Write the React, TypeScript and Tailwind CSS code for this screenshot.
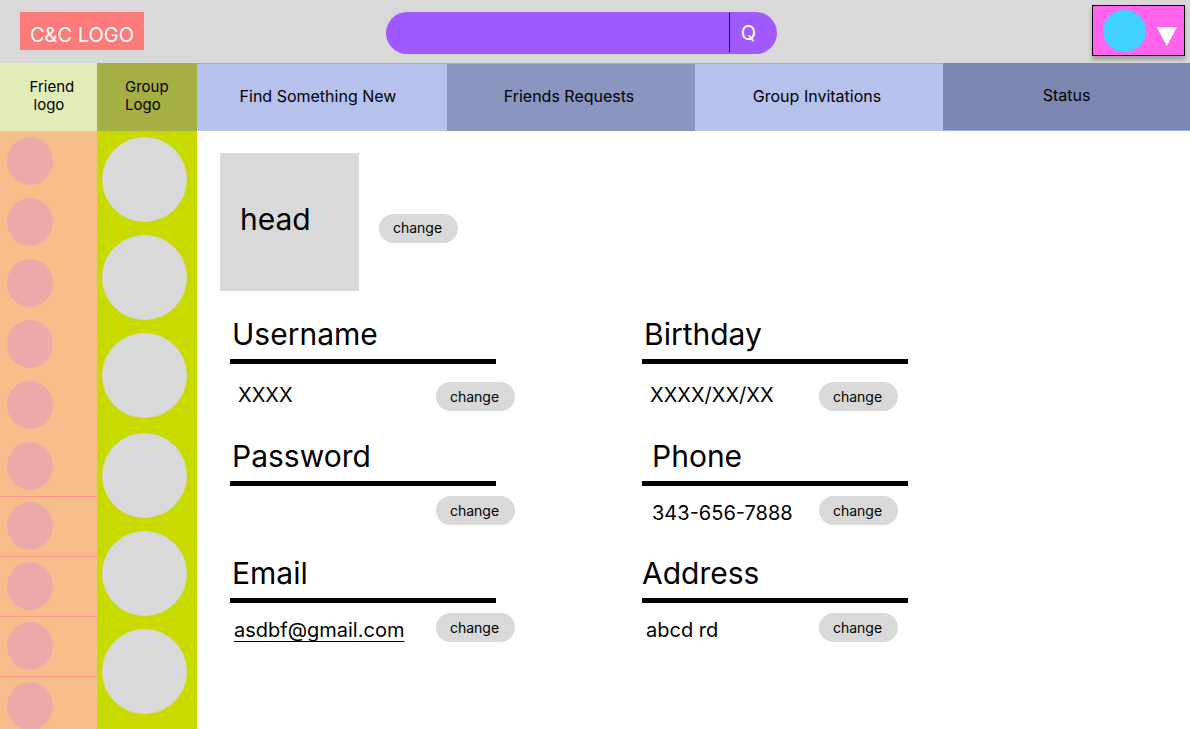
const friendRows = [
  { id: 1, divided: false, compact: false },
  { id: 2, divided: false, compact: false },
  { id: 3, divided: false, compact: false },
  { id: 4, divided: false, compact: false },
  { id: 5, divided: false, compact: false },
  { id: 6, divided: true, compact: false },
  { id: 7, divided: true, compact: true },
  { id: 8, divided: true, compact: true },
  { id: 9, divided: true, compact: true },
  { id: 10, divided: false, compact: true },
];

const groupSets = [
  [1, 2, 3],
  [4, 5, 6],
];

const tabs = [
  { label: "Find Something New", look: "border-t border-[#93a8ee] bg-[#b6c1ec] pr-2" },
  { label: "Friends Requests", look: "border-t border-[#93a8ee] bg-[#8a95c0] pr-1" },
  { label: "Group Invitations", look: "border-t border-[#93a8ee] bg-[#b6c1ec] pr-1" },
  { label: "Status", look: "border-b border-[#93a8ee] bg-[#7d88b2]" },
];

type FieldProps = {
  title: string;
  titleInset?: string;
  valueInset?: string;
  rowGap?: string;
  width: string;
  children?: React.ReactNode;
};

function ChangeButton({ label }: { label: string }) {
  return (
    <button
      type="button"
      aria-label={`change ${label}`}
      className="h-[29px] w-[79px] shrink-0 rounded-full bg-[#d9d9d9] pr-0.5 text-sm"
    >
      change
    </button>
  );
}

function Field({
  title,
  titleInset = "pl-0.5",
  valueInset = "",
  rowGap = "mt-2.5 mb-[3px]",
  width,
  children,
}: FieldProps) {
  return (
    <section>
      <h2 className={`w-[266px] border-b-[5px] border-black pb-[7px] text-[30px] leading-[35px] ${titleInset}`}>
        {title}
      </h2>
      <div className={`flex items-center justify-between ${rowGap} ${width}`}>
        <div className={`text-xl leading-6 ${valueInset}`}>{children}</div>
        <ChangeButton label={title} />
      </div>
    </section>
  );
}

export default function App() {
  return (
    <div className="flex h-screen flex-col overflow-hidden bg-white font-['Inter',sans-serif] text-black">
      <header className="flex h-[63px] shrink-0 items-start bg-[#d9d9d9] pr-[5px] pl-5">
        <a
          href="#home"
          className="mt-3 flex h-[38px] w-[124px] shrink-0 items-end bg-[#fc7a79] pb-0.5 pl-2.5 text-xl leading-[26px] whitespace-nowrap text-white"
        >
          C&amp;C LOGO
        </a>
        <form role="search" className="mt-3 ml-[242px] flex h-[42px] w-[391px] overflow-hidden rounded-full bg-[#9f59fd]">
          <input
            type="search"
            aria-label="Search"
            className="min-w-0 flex-1 bg-transparent px-5 text-xl text-white outline-none"
          />
          <button
            type="submit"
            aria-label="Q, search"
            className="mt-px mb-0.5 w-12 border-l border-black pr-2.5 text-xl text-white"
          >
            Q
          </button>
        </form>
        <button
          type="button"
          aria-label="Account menu"
          className="mt-[5px] ml-auto flex h-[51px] w-[93px] shrink-0 items-start border border-black bg-[#ff64eb] pt-1 pl-2.5 shadow-[0_4px_4px_rgba(0,0,0,0.25)]"
        >
          <span className="h-[42px] w-[43px] rounded-full bg-[#41d1ff]" />
          <svg viewBox="0 0 21 19" className="mt-[17px] ml-2.5 h-[19px] w-[21px]" aria-hidden="true">
            <path d="M0.6 0H21L10.8 19Z" fill="white" />
          </svg>
        </button>
      </header>

      <nav className="flex h-[68px] shrink-0">
        <a
          href="#friends"
          className="flex w-[97px] shrink-0 items-center justify-center bg-[#e2ecb9] pb-0.5 pl-2 text-[15px] leading-[18px]"
        >
          <span className="w-[46px]">
            Friend
            <br />
            <span className="pl-1">logo</span>
          </span>
        </a>
        <a
          href="#groups"
          className="flex w-[100px] shrink-0 items-center bg-[#a6af43] pb-0.5 pl-7 text-[15px] leading-[18px]"
        >
          <span>
            Group
            <br />
            Logo
          </span>
        </a>
        <div className="grid flex-1 grid-cols-[250fr_248fr_248fr_247fr]">
          {tabs.map((tab) => (
            <a
              key={tab.label}
              href="#tab"
              className={`flex items-center justify-center pb-[3px] text-base whitespace-nowrap ${tab.look}`}
            >
              {tab.label}
            </a>
          ))}
        </div>
      </nav>

      <div className="flex min-h-0 flex-1">
        <ul aria-label="Friends" className="w-[97px] shrink-0 overflow-hidden bg-[#f6be8b]">
          {friendRows.map((row) => (
            <li
              key={row.id}
              className={`pl-[7px] ${row.compact ? "h-[60px] pt-[5px]" : "h-[61px] pt-1.5"} ${
                row.divided ? "border-b border-[#ff9488]" : ""
              }`}
            >
              <div className="h-12 w-[46px] rounded-[50%] bg-[#ebaaaa]" />
            </li>
          ))}
        </ul>

        <div className="flex w-[100px] shrink-0 flex-col gap-[15px] overflow-hidden bg-[#c8da00] pt-1.5 pl-[5px]">
          {groupSets.map((set) => (
            <ul key={set[0]} aria-label="Groups" className="flex flex-col gap-[13px]">
              {set.map((id) => (
                <li key={id} className="size-[85px] rounded-full bg-[#d9d9d9]" />
              ))}
            </ul>
          ))}
        </div>

        <main className="min-w-0 flex-1 overflow-auto pt-[22px] pl-[23px]">
          <div className="flex items-center gap-5">
            <div className="flex h-[138px] w-[139px] items-center bg-[#d9d9d9] pb-1.5 pl-5 text-[30px] leading-9">
              head
            </div>
            <div className="pt-3">
              <ChangeButton label="head" />
            </div>
          </div>

          <div className="mt-[26px] grid grid-cols-[412px_1fr] gap-y-7 pl-2.5">
            <Field title="Username" rowGap="mt-[18px]" width="w-[285px]" valueInset="pb-1 pl-2">
              XXXX
            </Field>
            <Field title="Birthday" rowGap="mt-[18px]" width="w-[256px]" valueInset="pb-1 pl-2">
              XXXX/XX/XX
            </Field>
            <Field title="Password" width="w-[285px]" />
            <Field title="Phone" width="w-[256px]" titleInset="pl-2.5" valueInset="pl-2.5 pt-1">
              343-656-7888
            </Field>
            <Field title="Email" width="w-[285px]" valueInset="pt-1 pl-1">
              <a
                href="mailto:asdbf@gmail.com"
                className="underline decoration-1 underline-offset-4 [text-decoration-skip-ink:none]"
              >
                asdbf@gmail.com
              </a>
            </Field>
            <Field title="Address" width="w-[256px]" titleInset="" valueInset="pt-1 pl-1">
              abcd rd
            </Field>
          </div>
        </main>
      </div>
    </div>
  );
}
